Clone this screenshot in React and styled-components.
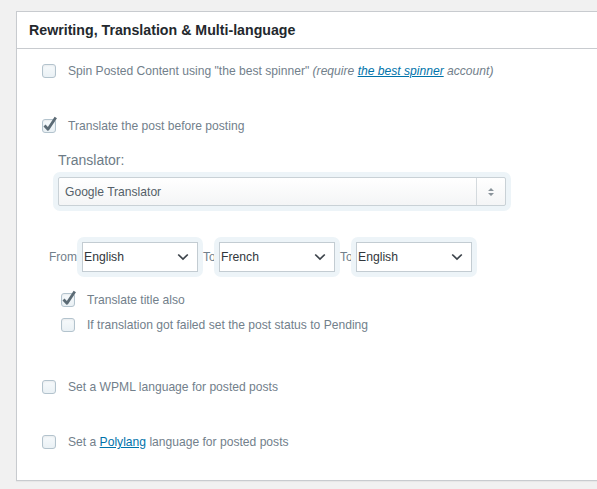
import React from 'react';
import styled, { createGlobalStyle } from 'styled-components';

const Global = createGlobalStyle`
  html, body {
    margin: 0;
    padding: 0;
    background: #f1f1f1;
    overflow: hidden;
  }
  body {
    font-family: "Liberation Sans", Arial, sans-serif;
    font-size: 12.1px;
    color: #72808b;
  }
`;

const Page = styled.div`
  padding: 11px 0 0 16px;
  height: 489px;
  box-sizing: border-box;
`;

const Panel = styled.div`
  width: 640px;
  background: #fff;
  border: 1px solid #c8cbcf;
  box-shadow: 0 1px 1px rgba(0, 0, 0, 0.04);
`;

const Header = styled.h2`
  margin: 0;
  height: 36px;
  display: flex;
  align-items: center;
  padding-left: 12px;
  font-size: 14.2px;
  font-weight: 600;
  color: #23282d;
  border-bottom: 1px solid #c8cbcf;
`;

const Body = styled.div`
  padding: 12px 0 28px 25px;
`;

const Row = styled.label`
  display: flex;
  align-items: center;
  height: 20px;
  margin-top: ${(p) => p.$top || 0}px;
  margin-left: ${(p) => p.$indent || 0}px;
`;

const Box = styled.span`
  position: relative;
  flex: none;
  width: 12px;
  height: 12px;
  border: 1px solid #b3c3cd;
  border-radius: 3px;
  background: linear-gradient(#f7fafc, #eaf1f5);
  box-shadow: inset 0 1px 2px rgba(0, 0, 0, 0.06);
  margin-right: 12px;
  svg {
    position: absolute;
    left: 0px;
    top: -4px;
  }
`;

const Text = styled.span`
  white-space: nowrap;
  em {
    font-style: italic;
  }
  a {
    color: #0073aa;
    text-decoration: underline;
  }
`;

const Check = ({ on }) => (
  <Box>
    {on && (
      <svg width="15" height="16" viewBox="0 0 15 16">
        <path d="M1.5 9.5 L5 13.2 L12.8 1.5" fill="none" stroke="#5c6b75" strokeWidth="2.8" strokeLinejoin="round" strokeLinecap="butt" />
      </svg>
    )}
  </Box>
);

const Option = ({ on, top, indent, children }) => (
  <Row $top={top} $indent={indent}>
    <Check on={on} />
    <Text>{children}</Text>
  </Row>
);

const TranslatorBlock = styled.div`
  margin: 14px 0 0 11px;
`;

const FieldLabel = styled.div`
  padding-left: 5px;
  font-size: 14px;
  line-height: 20px;
  color: #6d7b86;
`;

const Halo = styled.div`
  display: inline-block;
  flex: none;
  padding: 5px;
  border-radius: 7px;
  background: #edf4f8;
  margin-top: ${(p) => p.$top || 0}px;
`;

const BigSelect = styled.div`
  width: 446px;
  height: 27px;
  border: 1px solid #c9d1d6;
  border-radius: 2px;
  background: linear-gradient(#ffffff, #f4f5f6);
  display: flex;
  align-items: center;
  color: #545f68;
  span {
    flex: 1;
    padding-left: 6px;
  }
`;

const Spinner = styled.div`
  width: 28px;
  height: 100%;
  border-left: 1px solid #d4dade;
  display: flex;
  align-items: center;
  justify-content: center;
`;

const LangRow = styled.div`
  display: flex;
  align-items: center;
  margin: 26px 0 0 7px;
`;

const Small = styled.span`
  flex: none;
  width: ${(p) => p.$w}px;
  white-space: nowrap;
  font-size: 12px;
  color: #72808b;
`;

const SmallSelect = styled.div`
  width: 114px;
  height: 28px;
  border: 1px solid #c3ccd2;
  background: #fff;
  display: flex;
  align-items: center;
  justify-content: space-between;
  color: #32373c;
  font-size: 12.2px;
  span {
    padding-left: 1px;
  }
  svg {
    margin-right: 8px;
  }
`;

const Chevron = () => (
  <svg width="12" height="8" viewBox="0 0 12 8">
    <path d="M1.2 1.5 L6 6 L10.8 1.5" fill="none" stroke="#3c434a" strokeWidth="1.7" />
  </svg>
);

const LangSelect = ({ value }) => (
  <Halo>
    <SmallSelect>
      <span>{value}</span>
      <Chevron />
    </SmallSelect>
  </Halo>
);

export default function App() {
  return (
    <Page>
      <Global />
      <Panel>
        <Header>Rewriting, Translation &amp; Multi-language</Header>
        <Body>
          <Option>
            Spin Posted Content using "the best spinner" <em>(require <a href="#">the best spinner</a> account)</em>
          </Option>
          <Option on top={35}>Translate the post before posting</Option>
          <TranslatorBlock>
            <FieldLabel>Translator:</FieldLabel>
            <Halo $top={2}>
              <BigSelect>
                <span>Google Translator</span>
                <Spinner>
                  <svg width="8" height="10" viewBox="0 0 8 10">
                    <path d="M4 1 L7 4 L1 4 Z M4 9 L7 6 L1 6 Z" fill="#8a949b" />
                  </svg>
                </Spinner>
              </BigSelect>
            </Halo>
          </TranslatorBlock>
          <LangRow>
            <Small $w={28}>From</Small>
            <LangSelect value="English" />
            <Small $w={11}>To</Small>
            <LangSelect value="French" />
            <Small $w={11}>To</Small>
            <LangSelect value="English" />
          </LangRow>
          <Option on top={13} indent={19}>Translate title also</Option>
          <Option top={5} indent={19}>If translation got failed set the post status to Pending</Option>
          <Option top={42}>Set a WPML language for posted posts</Option>
          <Option top={35}>
            Set a <Text><a href="#">Polylang</a></Text> language for posted posts
          </Option>
        </Body>
      </Panel>
    </Page>
  );
}
